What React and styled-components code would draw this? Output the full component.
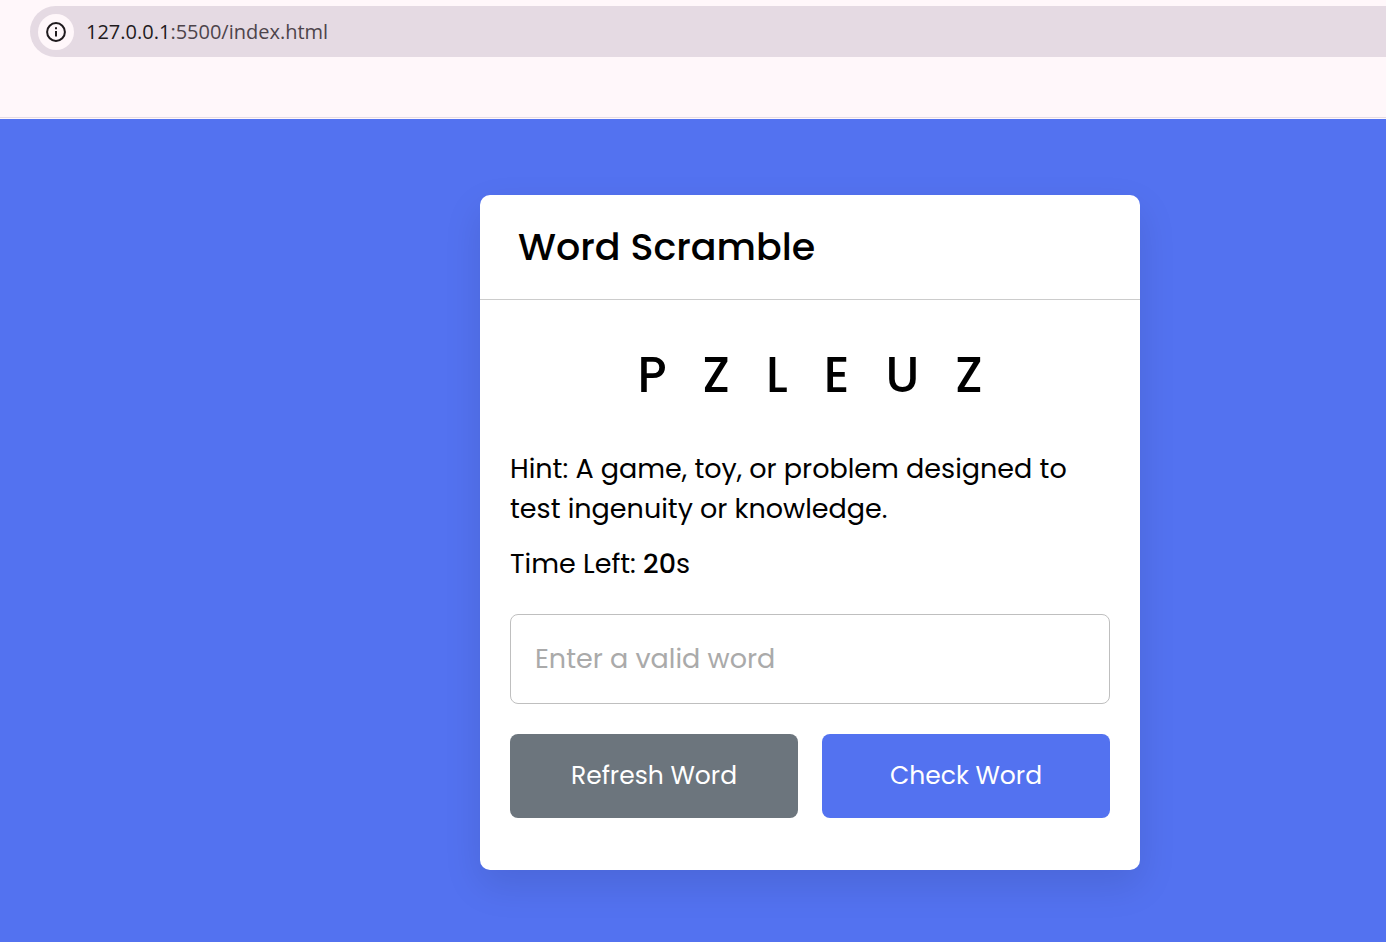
import React, { useState } from "react";
import styled, { createGlobalStyle } from "styled-components";

const GlobalStyle = createGlobalStyle`
  * { box-sizing: border-box; }
  html, body, #root { height: 100%; }
  body {
    margin: 0;
    font-family: Poppins, Inter, "Liberation Sans", sans-serif;
    color: #000;
  }
`;

const Shell = styled.div`
  display: flex;
  flex-direction: column;
  min-height: 100%;
`;

const Toolbar = styled.header`
  padding: 6px 0 61px 30px;
  background: #fff7fa;
  border-bottom: 1px solid #fff7fa;
  box-shadow: inset 0 -1px #e6dce2;
`;

const AddressBar = styled.div`
  display: flex;
  align-items: center;
  gap: 12px;
  height: 51px;
  padding-left: 8px;
  border-radius: 26px 0 0 26px;
  background: #e5dae3;
`;

const InfoButton = styled.button`
  display: grid;
  place-items: center;
  width: 36px;
  height: 36px;
  padding: 0;
  border: 0;
  border-radius: 50%;
  background: #fff7fa;
  color: #1f1a1d;
`;

const Address = styled.div`
  font: 20px/28px "Segoe UI", "Open Sans", "Noto Sans", sans-serif;
  color: #4d444b;
`;

const Host = styled.span`
  color: #1f1a1d;
`;

const Page = styled.main`
  flex: 1;
  display: flex;
  justify-content: center;
  align-items: flex-start;
  padding: 76px 0 72px 234px;
  background: #5372f0;
`;

const Card = styled.section`
  width: 100%;
  max-width: 660px;
  border-radius: 10px;
  background: #fff;
  box-shadow: 0 15px 38px rgba(0, 0, 0, 0.1);
`;

const Title = styled.h1`
  margin: 0;
  padding: 24px 38px;
  border-bottom: 1px solid #ccc;
  font-size: 38px;
  font-weight: 500;
  line-height: 56px;
`;

const Content = styled.form`
  padding: 38px 30px 52px;
`;

const Word = styled.p`
  margin: 0 -36px 37px 0;
  font-size: 49px;
  font-weight: 500;
  line-height: 74px;
  letter-spacing: 36px;
  text-align: center;
  text-transform: uppercase;
`;

const Detail = styled.p`
  margin: 0 0 15px;
  font-size: 27px;
  line-height: 40px;
`;

const Seconds = styled.b`
  font-weight: 500;
`;

const WordInput = styled.input`
  display: block;
  width: 100%;
  height: 90px;
  margin: 30px 0;
  padding: 0 24px;
  border: 1px solid #bfbfbf;
  border-radius: 8px;
  outline: none;
  font: inherit;
  font-size: 27px;
  &::placeholder { color: #aaa; opacity: 1; }
`;

const Buttons = styled.div`
  display: flex;
  gap: 24px;
`;

const Button = styled.button`
  flex: 1;
  height: 84px;
  padding: 0;
  border: 0;
  border-radius: 8px;
  background: ${(p) => (p.$primary ? "#5372f0" : "#6c757d")};
  color: #fff;
  font: inherit;
  font-size: 25px;
  cursor: pointer;
`;

function InfoIcon() {
  return (
    <svg width="20" height="20" viewBox="0 0 20 20" fill="none" aria-hidden="true">
      <circle cx="10" cy="10" r="8.9" stroke="currentColor" strokeWidth="2" />
      <path d="M10 9v5.5M10 5.2v2" stroke="currentColor" strokeWidth="2" />
    </svg>
  );
}

export default function App() {
  const [guess, setGuess] = useState("");
  return (
    <Shell>
      <GlobalStyle />
      <Toolbar>
        <AddressBar>
          <InfoButton type="button" aria-label="Site information">
            <InfoIcon />
          </InfoButton>
          <Address>
            <Host>127.0.0.1</Host>:5500/index.html
          </Address>
        </AddressBar>
      </Toolbar>
      <Page>
        <Card>
          <Title>Word Scramble</Title>
          <Content onSubmit={(e) => e.preventDefault()}>
            <Word>pzleuz</Word>
            <Detail>Hint: A game, toy, or problem designed to test ingenuity or knowledge.</Detail>
            <Detail>
              Time Left: <Seconds>20</Seconds>s
            </Detail>
            <WordInput
              type="text"
              aria-label="Your word"
              placeholder="Enter a valid word"
              value={guess}
              onChange={(e) => setGuess(e.target.value)}
            />
            <Buttons>
              <Button type="button">Refresh Word</Button>
              <Button type="submit" $primary>Check Word</Button>
            </Buttons>
          </Content>
        </Card>
      </Page>
    </Shell>
  );
}
